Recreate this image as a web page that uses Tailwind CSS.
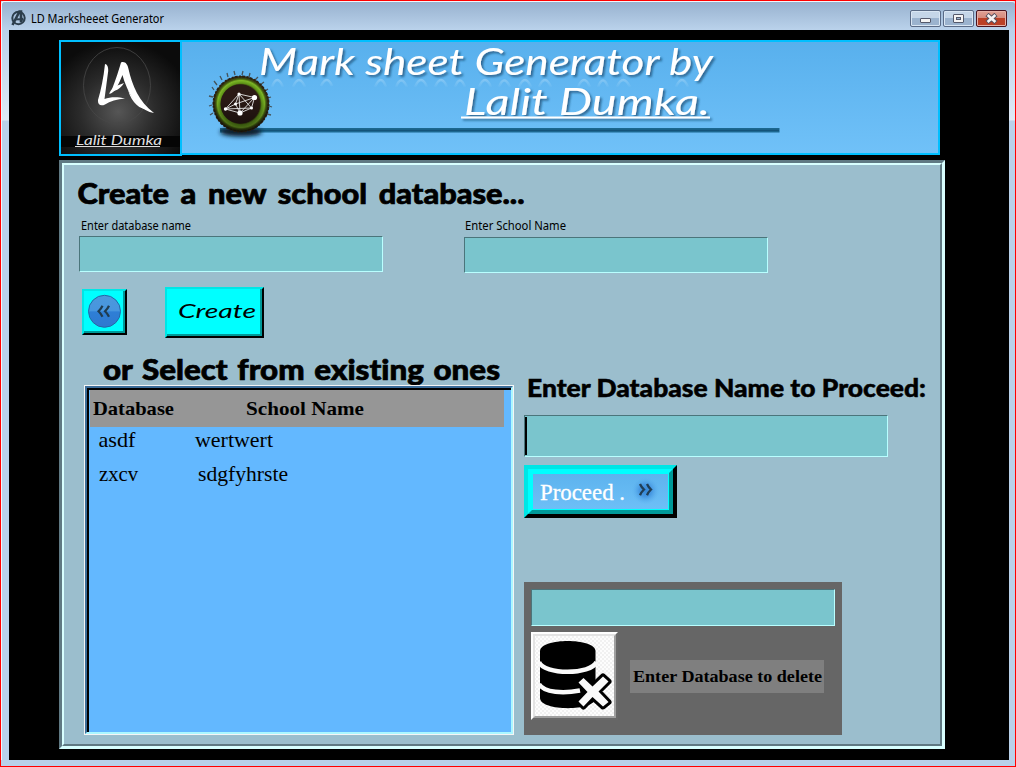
<!DOCTYPE html>
<html lang="en">
<head>
<meta charset="utf-8">
<title>LD Marksheeet Generator</title>
<script src="https://cdn.jsdelivr.net/npm/@tailwindcss/browser@4"></script>
</head>
<body class="w-[1016px] h-[767px] overflow-hidden bg-black [font-variant-ligatures:none]">
<div class="w-[1016px] h-[767px] flex flex-col border border-[#ff0000] bg-[#b9d1ea]">
  <header class="h-[29px] shrink-0 flex items-start rounded-t-[3px] border-t border-l border-[#f2f6fb] bg-linear-to-b from-[#98b2cf] to-[#bad2eb] pl-[8px] pr-[8px]">
    <svg class="w-[17px] h-[17px] mt-[7px] shrink-0" viewBox="0 0 17 17" fill="none" stroke="#2c3e4c">
      <circle cx="8.5" cy="9" r="6.2" stroke-width="2"/>
      <path d="M2.5 16 9.5 2.5 11 2.5 11 13.5" stroke-width="2.6"/>
      <path d="M5 10.3H13" stroke-width="2"/><path d="M11.5 8 14 10.3 11.5 12.5Z" fill="#2c3e4c" stroke="none"/>
    </svg>
    <svg class="w-[300px] h-[28px] ml-[4px]"><text x="0" y="21" textLength="133" lengthAdjust="spacingAndGlyphs" font-family="Noto Sans, sans-serif" font-size="12">LD Marksheeet Generator</text></svg>
    <div class="ml-auto mt-[8px] flex gap-[2px]">
      <div class="w-[31px] h-[17px] rounded-[2px] border border-[#5a6b86] bg-linear-to-b from-[#c5d6e8] from-50% to-[#9bb3ce] to-50% inset-shadow-[0_0_0_1px_#d9e6f3] flex justify-center">
        <div class="mt-[7px] w-[11px] h-[5px] rounded-[1px] border border-[#54596b] bg-[#f4f4f4]"></div>
      </div>
      <div class="w-[31px] h-[17px] rounded-[2px] border border-[#5a6b86] bg-linear-to-b from-[#c5d6e8] from-50% to-[#9bb3ce] to-50% inset-shadow-[0_0_0_1px_#d9e6f3] flex justify-center">
        <div class="mt-[3px] w-[11px] h-[9px] rounded-[1px] border border-[#54596b] bg-[#f4f4f4] flex items-center justify-center"><div class="w-[5px] h-[3px] border border-[#54596b] bg-[#9bb3ce]"></div></div>
      </div>
      <div class="w-[31px] h-[17px] rounded-[2px] border border-[#4a1520] bg-linear-to-b from-[#e0a195] from-0% via-[#d4897b] via-50% to-[#bb4026] to-50% inset-shadow-[0_0_0_1px_#e6b0a6] flex items-center justify-center">
        <svg class="w-[13px] h-[11px]" viewBox="0 0 13 11" fill="none"><path d="M2 1.500 11 9.500M11 1.500 2 9.500" stroke="#54505e" stroke-width="4.600"/><path d="M2.600 2 10.400 9M10.400 2 2.600 9" stroke="#f6f3f3" stroke-width="2.600"/></svg>
      </div>
    </div>
  </header>

  <div class="flex-1 flex">
    <div class="w-[8px] border-l border-[#f2f6fb] shrink-0 bg-linear-to-b from-[#b9d1ea] via-[#dfe9f5] via-[90px] to-[#b9d1ea] to-[91px]"></div>
    <main class="w-[1000px] h-[730px] shrink-0 bg-black pl-[50px] pt-[10px]">
      <div class="flex items-start h-[120px]">
        <svg class="w-[123px] h-[116px] shrink-0" viewBox="0 0 123 116">
          <defs>
            <radialGradient id="lg" cx=".48" cy=".62" r=".62"><stop offset="0" stop-color="#565656"/><stop offset=".5" stop-color="#2b2b2b"/><stop offset="1" stop-color="#0b0b0b"/></radialGradient>
            <filter id="soft"><feGaussianBlur stdDeviation=".45"/></filter>
          </defs>
          <rect x="1" y="1" width="121" height="114" fill="url(#lg)" stroke="#00bfff" stroke-width="2"/>
          <rect x="2" y="96" width="119" height="11" fill="#050505"/>
          <ellipse cx="58" cy="45.500" rx="33.500" ry="38" fill="none" stroke="#484848" stroke-width=".8"/>
          <g fill="#fff" filter="url(#soft)">
            <path d="M46 24C48 24 49.500 27 49.200 31L45.500 59C51 57 58 56.500 66 58.500C58 59 51 61.500 46 64.500C42 66.500 38.500 65 39 60C42 50 44.500 38 46 24Z"/>
            <path d="M62 22.500C66 21 68.500 24 69.500 29C73 45 80 62 95 73C83 71 74 61 69 50C66 43 64.500 39 63.500 35C60 43 57 51 51 54C55 45 59 33 62 22.500Z"/>
            <path d="M50 54C54 45 60 45.500 65 43C61 50 56 50 50 54Z"/>
            <path d="M69 50C75 61 81 67 90 69.500C82 70 73 64 69 50Z"/>
          </g>
          <text x="17" y="104.500" textLength="86" lengthAdjust="spacingAndGlyphs" font-family="Lato, sans-serif" font-style="italic" font-size="12.5" fill="#dedede">Lalit Dumka</text>
          <path d="M16 106.500H101" stroke="#ddd" stroke-width="1"/>
        </svg>
        <svg class="w-[758px] h-[115px] shrink-0 border-[#00bfff] border-t-2 border-r-2 border-b-2 bg-linear-to-b from-[#58b0ed] to-[#70c1f8]" viewBox="182 42 756 111">
          <defs>
            <linearGradient id="fade" gradientUnits="userSpaceOnUse" x1="0" y1="76" x2="0" y2="88"><stop offset="0" stop-color="#fff" stop-opacity=".32"/><stop offset="1" stop-color="#fff" stop-opacity="0"/></linearGradient>
            <radialGradient id="moss"><stop offset=".68" stop-color="#2e2310"/><stop offset=".74" stop-color="#5d9117"/><stop offset=".84" stop-color="#7cb526"/><stop offset=".9" stop-color="#41560f"/><stop offset="1" stop-color="#2b1f12"/></radialGradient>
            <linearGradient id="shade" x1="0" y1="0" x2="0" y2="1"><stop offset=".4" stop-color="#000" stop-opacity="0"/><stop offset="1" stop-color="#000" stop-opacity=".5"/></linearGradient>
            <filter id="blur2" x="-20%" y="-80%" width="140%" height="260%"><feGaussianBlur stdDeviation="2"/></filter>
            <filter id="drop" x="-5%" y="-20%" width="110%" height="150%"><feDropShadow dx="2" dy="2" stdDeviation="1" flood-color="#123c60" flood-opacity=".65"/></filter>
          </defs>
          <g fill="none" stroke="url(#fade)" stroke-width="2.500">
            <path d="M272 87q5-14 11 0m10 0q6-14 12 0m16-1q6-12 11 0M375 87q6-14 11 0m10 0q5-13 11 0m8 0q6-14 12 0m8 0q6-14 12 0m8 0q5-13 10 0M479 87q6-14 12 0m8 0q5-13 11 0m9 0q6-14 12 0m8 0q6-14 12 0m27 0q6-14 12 0m8 0q5-13 10 0m9 0q6-14 13 0M676 87q6-14 12 0"/>
          </g>
          <g font-family="Lato, sans-serif" font-style="italic" font-size="37" fill="#fff" filter="url(#drop)">
            <text x="259" y="75" textLength="454" lengthAdjust="spacingAndGlyphs">Mark sheet Generator by</text>
            <text x="464" y="115" textLength="246" lengthAdjust="spacingAndGlyphs">Lalit Dumka.</text>
            <path d="M461 117.500H710" stroke="#fff" stroke-width="2"/>
          </g>
          <rect x="220" y="128" width="559.500" height="4.500" fill="#1c678f"/><path d="M220 130.300H779" stroke="#124f73"/>
          <ellipse cx="241" cy="132" rx="21" ry="4.500" fill="#071e2b" filter="url(#blur2)"/>
          <path d="M214 90l-2-3M217 85l-3-4M222 80l-2-4M228 77l-1-4M235 75l-1-4M242 75l1-4M249 77l1-4M255 80l3-3M260 85l4-3M265 91l3-2M268 98l3-1M269 106l3 1M267 114l4 1M213 97l-4-1M212 105l-3 1M213 113l-3 2" stroke="#45545a" stroke-width="1.300"/>
          <circle cx="241" cy="104" r="28" fill="url(#moss)"/>
          <circle cx="241" cy="104" r="27.500" fill="none" stroke="#2c2011" stroke-width="2" stroke-dasharray="2 1 3 1.500"/>
          <circle cx="240" cy="104" r="19.500" fill="#2b1a15"/>
          <circle cx="241" cy="104" r="28" fill="url(#shade)"/>
          <g stroke="#e5e5e5" stroke-width=".9" fill="none"><path d="M225.500 109 239 94 254.500 97.500 251.500 108 240 113ZM225.500 109 235.500 104 254.500 97.500 240 113 235.500 104 239 94 251.500 108 225.500 109M239 94 240 113"/></g>
          <g fill="#fff"><circle cx="225.500" cy="109" r="1.700"/><circle cx="239" cy="94" r="1.600"/><circle cx="254.500" cy="97.500" r="2.600"/><circle cx="251.500" cy="108" r="1.500"/><circle cx="240" cy="113" r="2.600"/><circle cx="235.500" cy="104" r="1.500"/></g>
        </svg>
      </div>

      <section class="w-[886px] h-[589px] border-[3px] border-t-[#5f7983] border-l-[#5f7983] border-r-[#d8ffff] border-b-[#d8ffff]">
        <div class="h-full border-2 border-t-[#d8ffff] border-l-[#d8ffff] border-r-[#5f7983] border-b-[#5f7983] bg-[#9bbecd]">
          <svg class="block w-[500px] h-[50px]"><text x="13.500" y="39" textLength="447" lengthAdjust="spacingAndGlyphs" font-family="Lato, sans-serif" font-weight="900" font-size="28" stroke="#000" stroke-width=".7" word-spacing="4">Create a new school database...</text></svg>
          <div class="flex h-[58px] pl-[15px] gap-[81px]">
            <div class="w-[304px]">
              <svg class="block w-[304px] h-[21px]"><text x="2" y="15" textLength="110" lengthAdjust="spacingAndGlyphs" font-family="Noto Sans, sans-serif" font-size="12">Enter database name</text></svg>
              <div class="h-[36px] border border-t-[#4b757b] border-l-[#4b757b] border-r-[#b9ffff] border-b-[#b9ffff] bg-[#7ac5cd]"></div>
            </div>
            <div class="w-[304px]">
              <svg class="block w-[304px] h-[22px]"><text x="1" y="15" textLength="101" lengthAdjust="spacingAndGlyphs" font-family="Noto Sans, sans-serif" font-size="12">Enter School Name</text></svg>
              <div class="h-[36px] border border-t-[#4b757b] border-l-[#4b757b] border-r-[#b9ffff] border-b-[#b9ffff] bg-[#7ac5cd]"></div>
            </div>
          </div>
          <div class="flex h-[65px] pl-[18px] gap-[38px] items-end">
            <div class="w-[45px] h-[46px] mb-[3px] border-2 border-t-[#00e6e6] border-l-[#00e6e6] border-r-black border-b-black">
              <div class="h-full border-r-2 border-b-2 border-[#009999] bg-[#00ffff]">
                <svg class="block w-[39px] h-[40px]" viewBox="0 0 39 40">
                  <defs><linearGradient id="ball" x1="0" y1="0" x2="0" y2="1"><stop offset="0" stop-color="#4c98dc"/><stop offset=".48" stop-color="#4796df"/><stop offset=".52" stop-color="#2e7fd6"/><stop offset="1" stop-color="#2f78cf"/></linearGradient></defs>
                  <circle cx="20.500" cy="20.300" r="16" fill="url(#ball)" stroke="#2369a5"/>
                  <g fill="none" stroke="#203c50" stroke-width="2.200"><path d="M18.500 14.700C17.300 17.500 16 18.800 14.500 20.200C16 21.600 17.300 23 18.500 25.700M25 14.700C23.800 17.500 22.500 18.800 21 20.200C22.500 21.600 23.800 23 25 25.700"/></g>
                </svg>
              </div>
            </div>
            <div class="w-[99px] h-[51px] border-2 border-t-[#00e6e6] border-l-[#00e6e6] border-r-black border-b-black">
              <div class="h-full border-r-2 border-b-2 border-[#009999] bg-[#00ffff]">
                <svg class="block w-[93px] h-[45px]"><text x="11" y="29" textLength="78" lengthAdjust="spacingAndGlyphs" font-family="Lato, sans-serif" font-style="italic" font-size="19">Create</text></svg>
              </div>
            </div>
          </div>

          <div class="flex pl-[20px] gap-[10px]">
            <div class="w-[430px]">
              <svg class="block w-[430px] h-[47px]"><text x="19" y="42" textLength="397" lengthAdjust="spacingAndGlyphs" font-family="Lato, sans-serif" font-weight="900" font-size="28" stroke="#000" stroke-width=".7" word-spacing="2">or Select from existing ones</text></svg>
              <div class="h-[350px] border border-[#f5f5f5]">
                <div class="h-full border-2 border-t-[#3d6d99] border-l-[#3d6d99] border-r-[#abf7ff] border-b-[#abf7ff]">
                  <div class="h-full border-t-2 border-l-2 border-black bg-[#63b8ff] pl-px">
                    <svg class="block w-[414px] h-[37px] bg-[#969696]" font-family="Liberation Serif, serif" font-weight="700" font-size="19"><text x="3" y="25" textLength="81" lengthAdjust="spacingAndGlyphs">Database</text><text x="156" y="25" textLength="118" lengthAdjust="spacingAndGlyphs">School Name</text></svg>
                    <svg class="block w-[414px] h-[34px]" font-family="Liberation Serif, serif" font-size="21"><text x="8.500" y="20" textLength="37" lengthAdjust="spacingAndGlyphs">asdf</text><text x="105" y="20" textLength="78" lengthAdjust="spacingAndGlyphs">wertwert</text></svg>
                    <svg class="block w-[414px] h-[34px]" font-family="Liberation Serif, serif" font-size="21"><text x="9" y="20" textLength="39" lengthAdjust="spacingAndGlyphs">zxcv</text><text x="108" y="20" textLength="90" lengthAdjust="spacingAndGlyphs">sdgfyhrste</text></svg>
                  </div>
                </div>
              </div>
            </div>
            <div class="w-[410px] flex flex-col items-start">
              <svg class="block w-[410px] h-[77px]"><text x="3" y="59" textLength="399" lengthAdjust="spacingAndGlyphs" font-family="Lato, sans-serif" font-weight="900" font-size="25" stroke="#000" stroke-width=".5">Enter Database Name to Proceed:</text></svg>
              <div class="w-[364px] h-[42px] border border-t-[#4b757b] border-l-[#4b757b] border-r-[#b9ffff] border-b-[#b9ffff] bg-[#7ac5cd] py-px"><div class="w-[2px] h-full bg-black"></div></div>
              <div class="w-[153px] h-[53px] mt-[8px] border-4 border-t-[#00e6e6] border-l-[#00e6e6] border-r-black border-b-black">
                <div class="h-full border-4 border-t-[#00ffff] border-l-[#00ffff] border-r-[#009999] border-b-[#009999]">
                  <div class="h-full border border-[#00ffff] bg-linear-to-b from-[#5db3ee] to-[#6dbff7]">
                    <svg class="block w-[135px] h-[35px]" viewBox="533 474 135 35">
                      <defs><radialGradient id="halo"><stop offset="0" stop-color="#3587d8"/><stop offset=".45" stop-color="#4798e2"/><stop offset="1" stop-color="#5eb4ef" stop-opacity="0"/></radialGradient></defs>
                      <ellipse cx="645.500" cy="490.500" rx="14" ry="14" fill="url(#halo)"/>
                      <path d="M640 484C641.200 486.800 642.400 488 644 489.500C642.400 491 641.200 492.300 640 495.200M647 484C648.200 486.800 649.400 488 651 489.500C649.400 491 648.200 492.300 647 495.200" fill="none" stroke="#203e55" stroke-width="2.300"/>
                      <text x="540" y="500" textLength="85" lengthAdjust="spacingAndGlyphs" font-family="Liberation Serif, serif" font-size="23" fill="#fff" stroke="#fff" stroke-width=".3">Proceed .</text>
                    </svg>
                  </div>
                </div>
              </div>
              <div class="w-[318px] h-[153px] mt-[64px] bg-[#666] p-[7px]">
                <div class="w-[304px] h-[37px] border border-t-[#4b757b] border-l-[#4b757b] border-r-[#b9ffff] border-b-[#b9ffff] bg-[#7ac5cd]"></div>
                <div class="flex items-start mt-[6px]">
                  <div class="w-[87px] h-[88px] border-2 border-t-white border-l-white border-r-[#696969] border-b-[#696969] shrink-0">
                    <div class="h-full border-2 border-t-[#e3e3e3] border-l-[#e3e3e3] border-r-[#a0a0a0] border-b-[#a0a0a0]">
                      <svg class="block w-[79px] h-[80px]" viewBox="535 636 79 80">
                        <defs><pattern id="check" width="4" height="4" patternUnits="userSpaceOnUse"><rect width="4" height="4" fill="#fdfdfd"/><path d="M0 0H2V2H0ZM2 2H4V4H2Z" fill="#f1f1f1"/></pattern></defs>
                        <rect x="535" y="636" width="79" height="80" fill="url(#check)"/>
                        <path d="M540 651C540 637.500 595.500 637.500 595.500 651V698C595.500 711.500 540 711.500 540 698Z"/>
                        <path d="M539 662C544 675 591 675 596.500 662M539 684C544 693 564 693.500 580 690.500" fill="none" stroke="#fafafa" stroke-width="4.500"/>
                        <g stroke-linejoin="round" fill="#fafafa"><path d="M583.500 678 592.500 686.500 603 676.500 608.500 681.500 598.500 691.500 608.500 702 603 706.500 592.500 697 583.500 706.500 578.500 701.500 587.500 692 578.500 682.500Z" stroke="#000" stroke-width="6"/><path d="M583.500 678 592.500 686.500 603 676.500 608.500 681.500 598.500 691.500 608.500 702 603 706.500 592.500 697 583.500 706.500 578.500 701.500 587.500 692 578.500 682.500Z"/></g>
                      </svg>
                    </div>
                  </div>
                  <svg class="block w-[194px] h-[33px] ml-[12px] mt-[28px] bg-[#7f7f7f]"><text x="3" y="22" textLength="189" lengthAdjust="spacingAndGlyphs" font-family="Liberation Serif, serif" font-weight="700" font-size="17">Enter Database to delete</text></svg>
                </div>
              </div>
            </div>
          </div>
        </div>
      </section>
    </main>
    <div class="flex-1 bg-linear-to-b from-[#b9d1ea] via-[#dfe9f5] via-[90px] to-[#b9d1ea] to-[91px]"></div>
  </div>
  <div class="h-[6px] shrink-0"></div>
</div>
</body>
</html>
